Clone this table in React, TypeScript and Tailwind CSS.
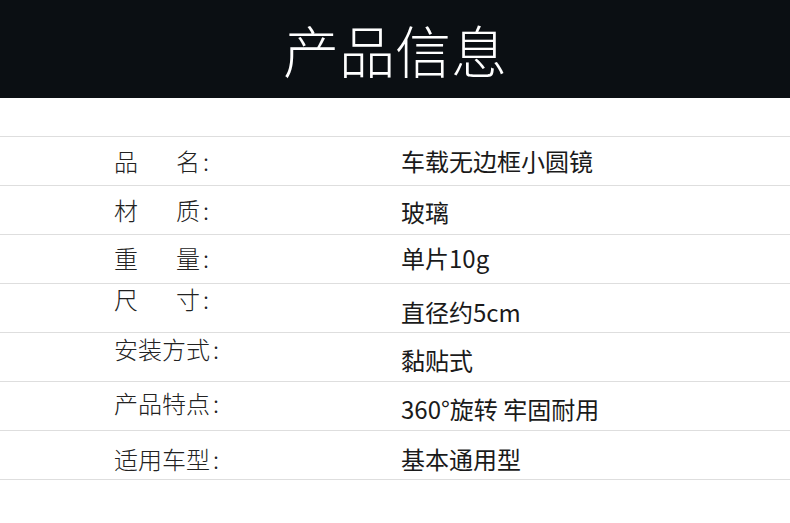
const rows = [
  { label: ['品', '名'], value: '车载无边框小圆镜', labelShift: '', valueShift: '' },
  { label: ['材', '质'], value: '玻璃', labelShift: '', valueShift: 'pt-[3px]' },
  { label: ['重', '量'], value: '单片10g', labelShift: 'pb-[3px]', valueShift: 'pb-[2px]' },
  { label: ['尺', '寸'], value: '直径约5cm', labelShift: 'pb-[18px]', valueShift: 'pt-[8px]' },
  { label: ['安装方式'], value: '黏贴式', labelShift: 'pb-[16px]', valueShift: 'pt-[6px]' },
  { label: ['产品特点'], value: '360°旋转 牢固耐用', labelShift: 'pb-[6px]', valueShift: 'pt-[6px]' },
  { label: ['适用车型'], value: '基本通用型', labelShift: 'pt-[7px]', valueShift: 'pt-[7px]' },
]

export default function App() {
  return (
    <main className="h-[523px] w-[790px] overflow-hidden bg-white font-['Noto_Sans_CJK_SC',sans-serif]">
      <header className="flex h-[98px] items-center justify-center bg-[#0b0f13]">
        <h1 className="text-[56px] font-light leading-none text-white">产品信息</h1>
      </header>

      <section className="mt-[38px] border-t border-[#dedede]">
        {rows.map((row) => (
          <div key={row.value} className="flex h-[49px] items-center border-b border-[#dedede] text-[24px] leading-none">
            <div className={`flex w-[401px] shrink-0 pl-[114px] font-light text-[#222] ${row.labelShift}`}>
              {row.label.length === 2 ? (
                <>
                  <span>{row.label[0]}</span>
                  <span className="ml-[38px]">{row.label[1]}</span>
                </>
              ) : (
                <span>{row.label[0]}</span>
              )}
              <span className="ml-[3px]">:</span>
            </div>
            <div className={`text-[#1a1a1a] ${row.valueShift}`}>{row.value}</div>
          </div>
        ))}
      </section>
    </main>
  )
}
